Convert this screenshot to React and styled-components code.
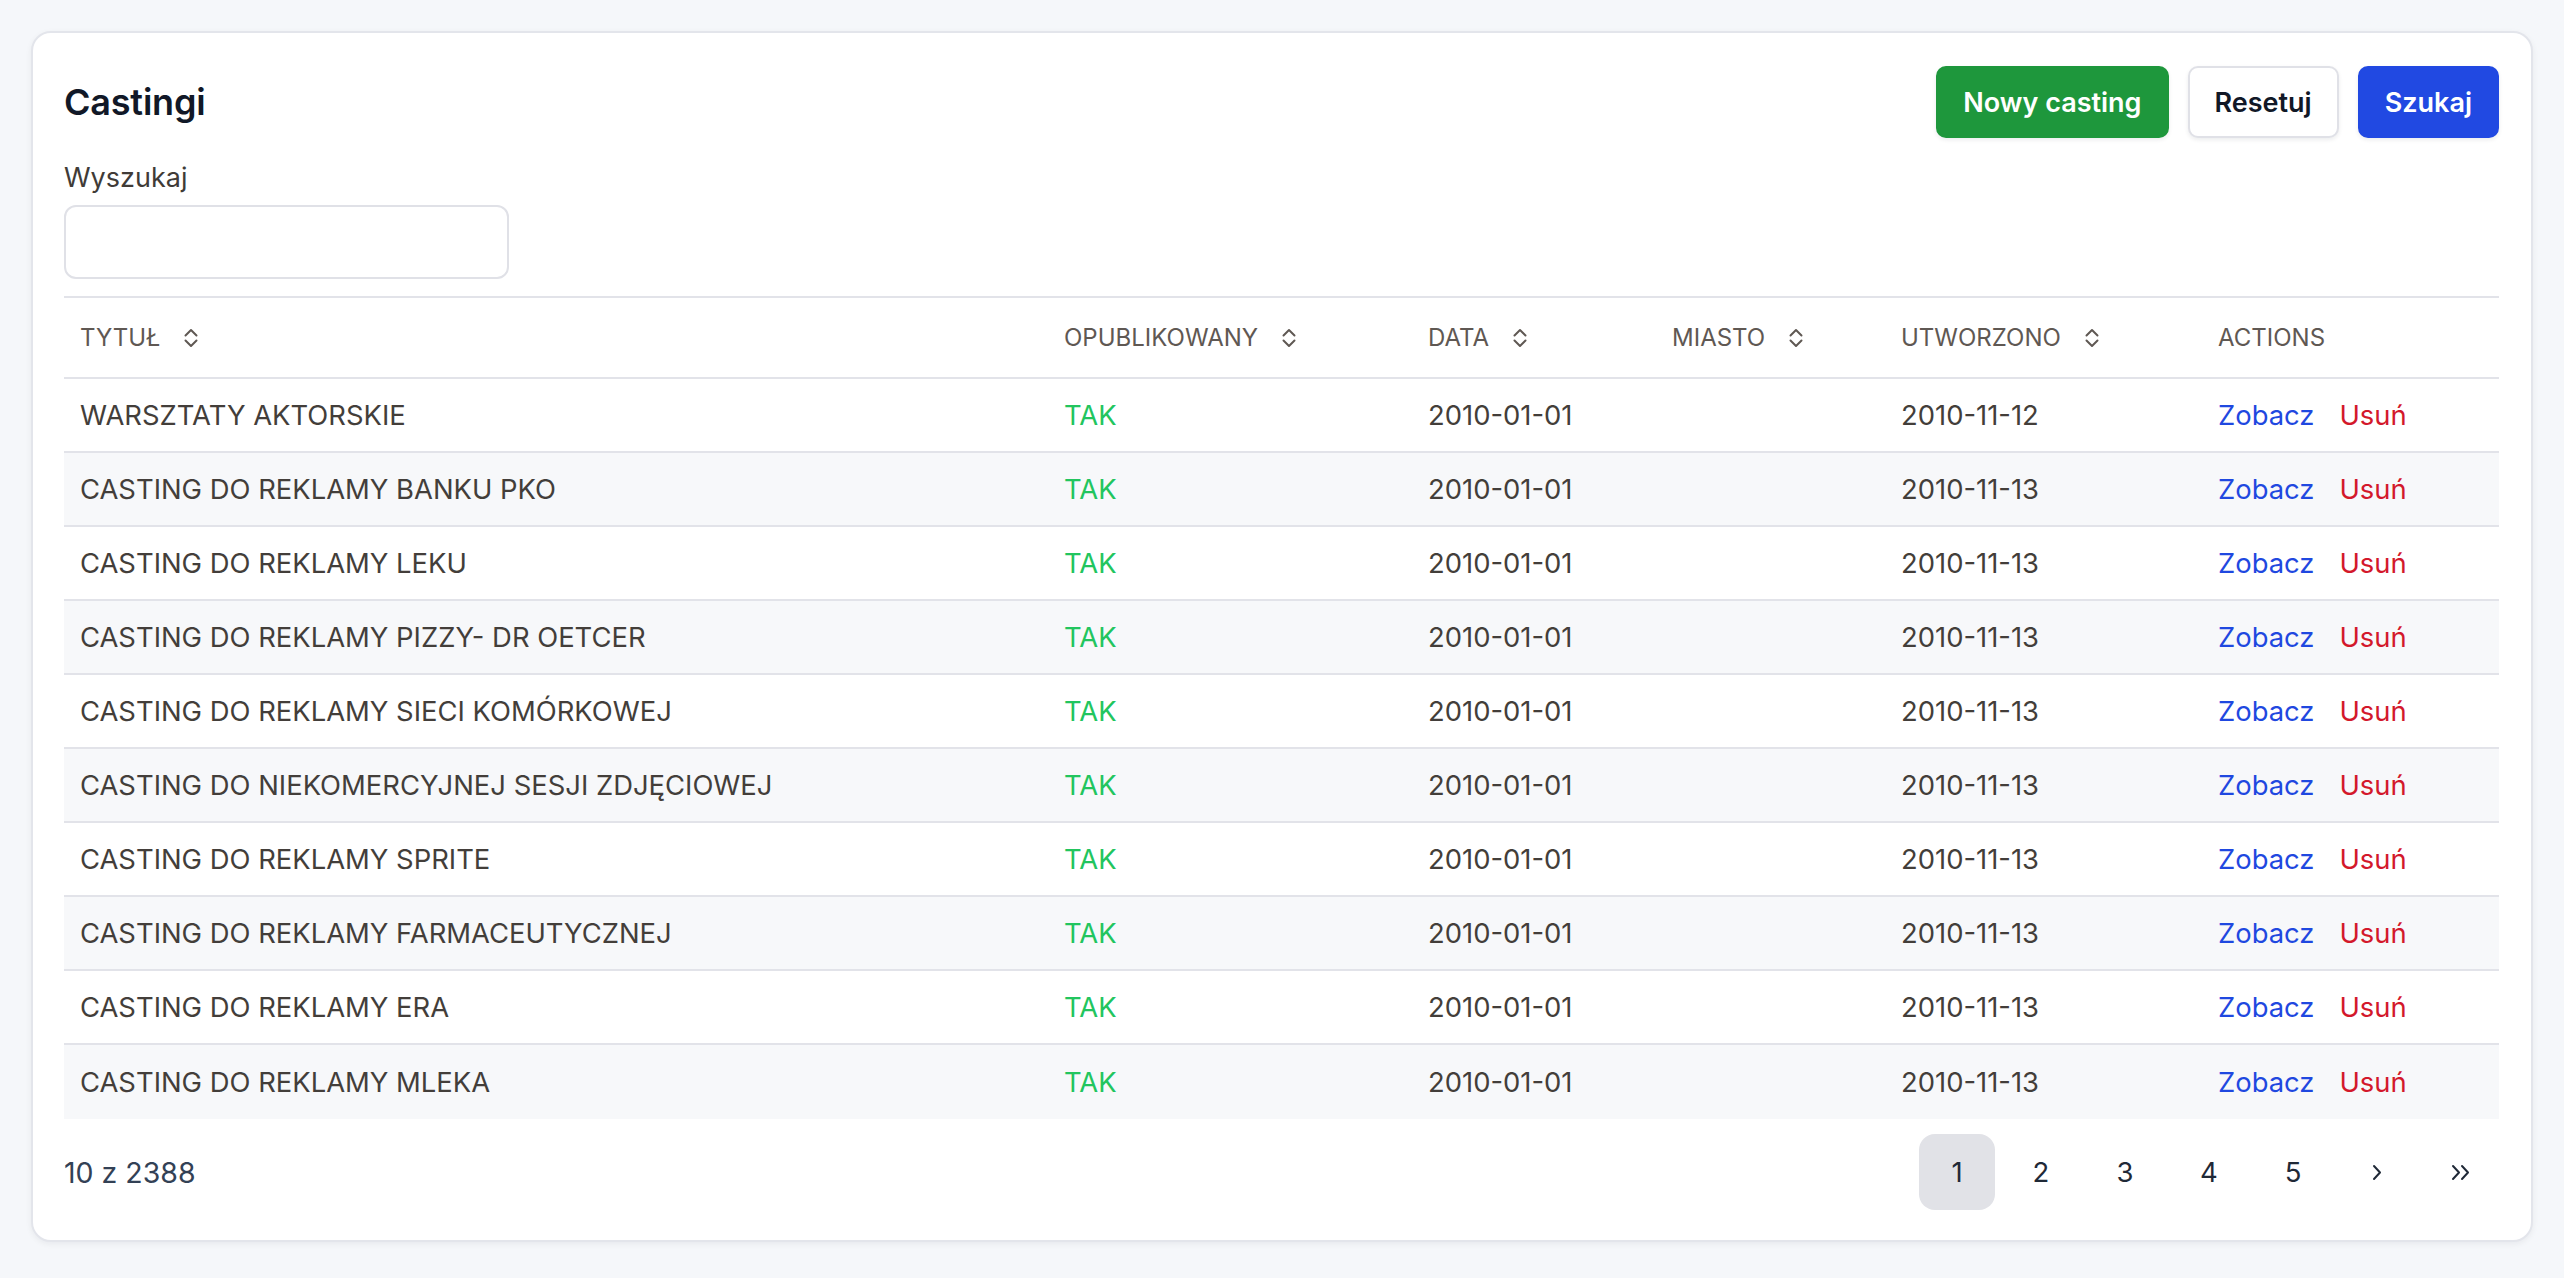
import React from 'react';
import styled, { createGlobalStyle } from 'styled-components';

const GlobalStyle = createGlobalStyle`
  html, body {
    margin: 0;
    background: #f5f7fa;
  }
  body {
    font-family: Inter, "Noto Sans", sans-serif;
  }
  * {
    box-sizing: border-box;
  }
`;

const Page = styled.div`
  padding: 31px;
`;

const Card = styled.section`
  background: #fff;
  border: 2px solid #e3e5eb;
  border-radius: 20px;
  box-shadow: 0 2px 6px rgba(17, 24, 39, 0.06);
  padding: 33px 32px 30px 31px;
`;

const Header = styled.div`
  display: flex;
  align-items: center;
  justify-content: space-between;
  height: 72px;
`;

const Title = styled.h1`
  margin: 0;
  font-size: 36px;
  font-weight: 600;
  color: #111827;
  letter-spacing: -0.2px;
`;

const Toolbar = styled.div`
  display: flex;
  gap: 19px;
`;

const variants = {
  green: { bg: '#1e973c', color: '#fff', border: '#1e973c' },
  white: { bg: '#fff', color: '#111827', border: '#e0e1e7' },
  blue: { bg: '#2149e2', color: '#fff', border: '#2149e2' },
};

const Button = styled.button`
  height: 72px;
  padding: 0 25px;
  border-radius: 10px;
  border: 2px solid ${(p) => variants[p.$variant].border};
  background: ${(p) => variants[p.$variant].bg};
  color: ${(p) => variants[p.$variant].color};
  font-family: inherit;
  font-size: 27px;
  font-weight: 600;
  box-shadow: 0 2px 4px rgba(17, 24, 39, 0.08);
  cursor: pointer;
`;

const Field = styled.div`
  display: flex;
  flex-direction: column;
  margin-top: 20px;
`;

const Label = styled.label`
  font-size: 27px;
  line-height: 40px;
  color: #403b37;
`;

const Input = styled.input`
  margin-top: 7px;
  width: 445px;
  height: 74px;
  border: 2px solid #e0e1e7;
  border-radius: 12px;
  font-family: inherit;
  font-size: 27px;
  padding: 0 16px;
  outline: none;
`;

const Table = styled.table`
  width: 100%;
  margin-top: 17px;
  border-collapse: separate;
  border-spacing: 0;
  table-layout: fixed;
  border-top: 2px solid #e2e3e9;
`;

const Th = styled.th`
  height: 81px;
  padding: 0 16px;
  text-align: left;
  font-size: 24px;
  font-weight: 400;
  color: #5f5853;
  text-transform: uppercase;
  border-bottom: 2px solid #e2e3e9;
  white-space: nowrap;
`;

const ThInner = styled.span`
  display: inline-flex;
  align-items: center;
  gap: 24px;
`;

const Tr = styled.tr`
  background: ${(p) => (p.$striped ? '#f7f8fa' : '#fff')};
`;

const Td = styled.td`
  height: 74px;
  padding: 0 16px;
  font-size: 27.4px;
  color: ${(p) => p.$color || '#433e3a'};
  border-bottom: ${(p) => (p.$last ? 'none' : '2px solid #e2e3e9')};
  white-space: nowrap;
`;

const ActionLink = styled.a`
  color: ${(p) => (p.$danger ? '#d3182b' : '#1f48e0')};
  text-decoration: none;
  margin-right: 25px;
  cursor: pointer;
`;

const Footer = styled.div`
  display: flex;
  align-items: center;
  justify-content: space-between;
  margin-top: 15px;
`;

const Count = styled.div`
  font-size: 28.5px;
  color: #334155;
`;

const Pagination = styled.div`
  display: flex;
  gap: 8px;
`;

const PageButton = styled.button`
  width: 76px;
  height: 76px;
  border: none;
  border-radius: 16px;
  background: ${(p) => (p.$active ? '#e1e2e7' : 'transparent')};
  color: #1f2937;
  font-family: inherit;
  font-size: 27.5px;
  display: flex;
  align-items: center;
  justify-content: center;
  cursor: pointer;
`;

function SortIcon() {
  return (
    <svg width="14" height="22" viewBox="0 0 14 22" fill="none" stroke="currentColor" strokeWidth="2" strokeLinecap="round" strokeLinejoin="round">
      <path d="M1.5 8.5 L7 3 L12.5 8.5" />
      <path d="M1.5 13.5 L7 19 L12.5 13.5" />
    </svg>
  );
}

function NextIcon() {
  return (
    <svg width="10" height="17" viewBox="0 0 10 17" fill="none" stroke="currentColor" strokeWidth="2" strokeLinecap="round" strokeLinejoin="round">
      <path d="M2 2 L8 8.5 L2 15" />
    </svg>
  );
}

function LastIcon() {
  return (
    <svg width="20" height="17" viewBox="0 0 20 17" fill="none" stroke="currentColor" strokeWidth="2" strokeLinecap="round" strokeLinejoin="round">
      <path d="M2 2 L8 8.5 L2 15" />
      <path d="M11 2 L17 8.5 L11 15" />
    </svg>
  );
}

const columns = [
  { label: 'Tytuł', width: 984, sort: true },
  { label: 'Opublikowany', width: 364, sort: true },
  { label: 'Data', width: 244, sort: true },
  { label: 'Miasto', width: 229, sort: true },
  { label: 'Utworzono', width: 317, sort: true },
  { label: 'Actions', width: 297, sort: false },
];

const rows = [
  ['WARSZTATY AKTORSKIE', '2010-11-12'],
  ['CASTING DO REKLAMY BANKU PKO', '2010-11-13'],
  ['CASTING DO REKLAMY LEKU', '2010-11-13'],
  ['CASTING DO REKLAMY PIZZY- DR OETCER', '2010-11-13'],
  ['CASTING DO REKLAMY SIECI KOMÓRKOWEJ', '2010-11-13'],
  ['CASTING DO NIEKOMERCYJNEJ SESJI ZDJĘCIOWEJ', '2010-11-13'],
  ['CASTING DO REKLAMY SPRITE', '2010-11-13'],
  ['CASTING DO REKLAMY FARMACEUTYCZNEJ', '2010-11-13'],
  ['CASTING DO REKLAMY ERA', '2010-11-13'],
  ['CASTING DO REKLAMY MLEKA', '2010-11-13'],
];

export default function App() {
  return (
    <Page>
      <GlobalStyle />
      <Card>
        <Header>
          <Title>Castingi</Title>
          <Toolbar>
            <Button $variant="green">Nowy casting</Button>
            <Button $variant="white">Resetuj</Button>
            <Button $variant="blue">Szukaj</Button>
          </Toolbar>
        </Header>

        <Field>
          <Label htmlFor="search">Wyszukaj</Label>
          <Input id="search" type="text" />
        </Field>

        <Table>
          <colgroup>
            {columns.map((c) => (
              <col key={c.label} style={{ width: c.width }} />
            ))}
          </colgroup>
          <thead>
            <tr>
              {columns.map((c) => (
                <Th key={c.label}>
                  <ThInner>
                    {c.label}
                    {c.sort && <SortIcon />}
                  </ThInner>
                </Th>
              ))}
            </tr>
          </thead>
          <tbody>
            {rows.map(([title, created], i) => {
              const last = i === rows.length - 1;
              return (
                <Tr key={title} $striped={i % 2 === 1}>
                  <Td $last={last}>{title}</Td>
                  <Td $last={last} $color="#22c55e">TAK</Td>
                  <Td $last={last}>2010-01-01</Td>
                  <Td $last={last}></Td>
                  <Td $last={last}>{created}</Td>
                  <Td $last={last}>
                    <ActionLink>Zobacz</ActionLink>
                    <ActionLink $danger>Usuń</ActionLink>
                  </Td>
                </Tr>
              );
            })}
          </tbody>
        </Table>

        <Footer>
          <Count>10 z 2388</Count>
          <Pagination>
            {[1, 2, 3, 4, 5].map((n) => (
              <PageButton key={n} $active={n === 1}>{n}</PageButton>
            ))}
            <PageButton><NextIcon /></PageButton>
            <PageButton><LastIcon /></PageButton>
          </Pagination>
        </Footer>
      </Card>
    </Page>
  );
}
